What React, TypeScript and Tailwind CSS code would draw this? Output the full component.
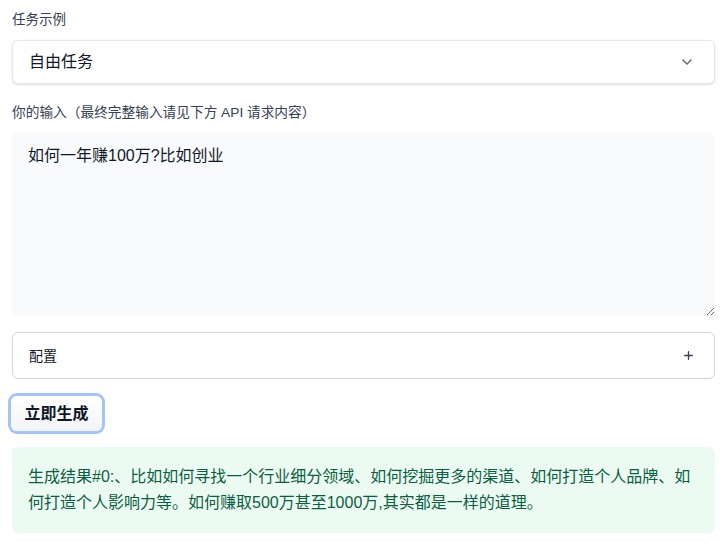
import React from 'react';
import { ChevronDown, Plus } from 'lucide-react';

const FONT = { fontFamily: '"Liberation Sans", "Noto Sans CJK SC", sans-serif' };

export default function App() {
  const [task] = React.useState('自由任务');

  return (
    <div className="flex min-h-screen flex-col bg-white pl-3 pr-[11px] pt-[10px] text-gray-800" style={FONT}>
      <label className="text-[13.5px] leading-5 text-gray-700">任务示例</label>

      <div className="mt-[10px] flex h-11 items-center justify-between rounded-md border border-gray-200 bg-white pl-4 pr-[19px] shadow-sm">
        <span className="text-base text-gray-900">{task}</span>
        <ChevronDown size={16} strokeWidth={2.5} className="text-gray-500" />
      </div>

      <label className="mt-[19px] text-[13.7px] leading-5 text-gray-700">
        你的输入（最终完整输入请见下方 API 请求内容）
      </label>

      <textarea
        className="mt-[9px] h-[184px] w-full rounded-md bg-gray-50 px-4 pt-3 text-base leading-6 text-gray-900 outline-none"
        style={FONT}
        defaultValue="如何一年赚100万?比如创业"
      />

      <div className="mt-4 flex h-[47px] items-center justify-between rounded-md border border-gray-300 bg-white pl-4 pr-[19px]">
        <span className="text-sm text-gray-900">配置</span>
        <Plus size={13} strokeWidth={2.5} className="text-gray-700" />
      </div>

      <div className="mt-[17px] flex">
        <button className="-ml-px h-[35px] w-[91px] rounded-md bg-gradient-to-b from-white to-gray-100 text-base font-bold text-gray-900 ring-[3px] ring-[#a4c3fb]">
          立即生成
        </button>
      </div>

      <div className="mt-4 rounded-md bg-[#ebfbf2] px-4 py-[17px] text-base leading-[26px] text-[#0b5e42]">
        生成结果#0:、比如如何寻找一个行业细分领域、如何挖掘更多的渠道、如何打造个人品牌、如何打造个人影响力等。如何赚取500万甚至1000万,其实都是一样的道理。
      </div>
    </div>
  );
}
